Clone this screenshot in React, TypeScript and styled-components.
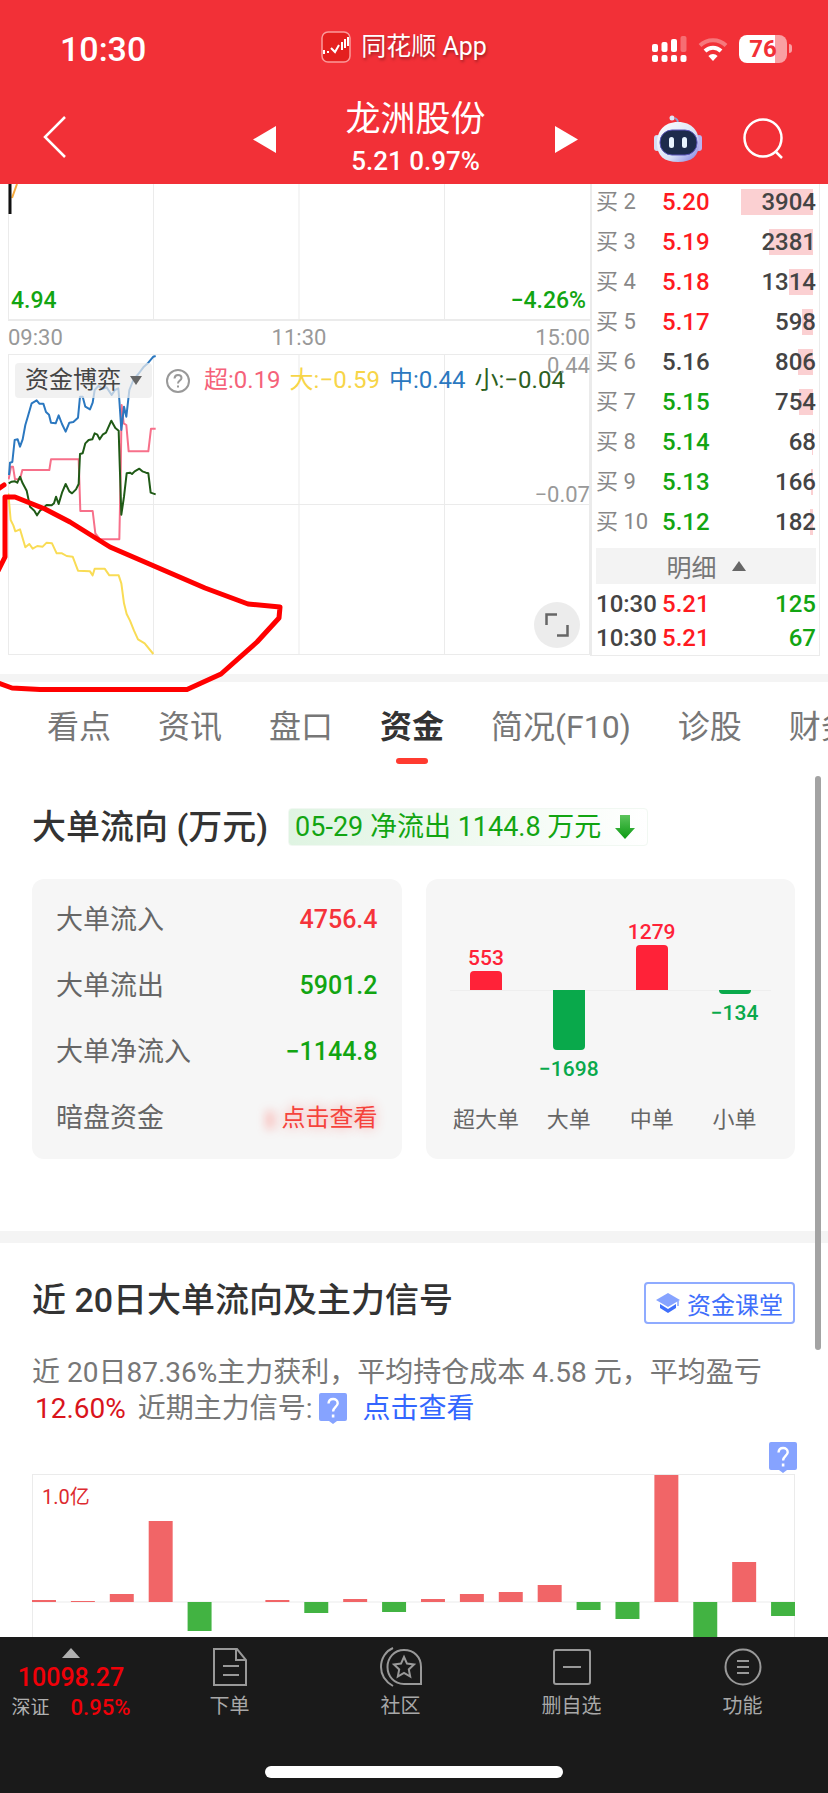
import React from 'react';
import styled, { createGlobalStyle } from 'styled-components';

const RED = '#f23037';
const UP = '#ff1a1f';
const DOWN = '#12a512';
const LINE = '#ebebeb';

const GlobalStyle = createGlobalStyle`
  * { box-sizing: border-box; }
  body {
    margin: 0;
    background: #fff;
    color: #333;
    font-family: Roboto, "Noto Sans CJK SC", sans-serif;
  }
  button, select { font: inherit; color: inherit; background: none; border: 0; padding: 0; margin: 0; }
  h1, h2, p { margin: 0; font-weight: 400; }
  svg { display: block; }
  a { text-decoration: none; color: inherit; }
`;

const Shell = styled.div`
  display: flex;
  flex-direction: column;
  height: 100vh;
  overflow: hidden;
`;

/* ---------- header ---------- */

const Header = styled.header`
  flex: none;
  background: ${RED};
  color: #fff;
`;

const StatusBar = styled.div`
  display: grid;
  grid-template-columns: 1fr auto 1fr;
  align-items: center;
  height: 97px;
  padding: 0 36px 0 16px;
`;

const Clock = styled.time`
  padding-left: 44px;
  font-size: 34px;
  line-height: 40px;
  font-weight: 500;
`;

const AppTag = styled.div`
  display: flex;
  align-items: center;
  gap: 10px;
  padding-bottom: 4px;
  font-size: 25px;
  line-height: 32px;
  text-shadow: 1px 2px 3px rgba(0, 0, 0, 0.35);
`;

const StatusIcons = styled.div`
  display: flex;
  justify-content: flex-end;
  align-items: center;
  gap: 11px;
`;

const Battery = styled.div`
  display: flex;
  align-items: center;
  gap: 2px;
`;

const BatteryBody = styled.div`
  width: 48px;
  height: 28px;
  border-radius: 8px;
  background: linear-gradient(90deg, #fff 76%, #f9a0a3 76%);
  color: ${RED};
  font-size: 24px;
  line-height: 28px;
  font-weight: 700;
  text-align: center;
`;

const BatteryTip = styled.div`
  width: 3px;
  height: 9px;
  border-radius: 0 3px 3px 0;
  background: #f9a0a3;
`;

const StockNav = styled.div`
  display: grid;
  grid-template-columns: 1fr auto 1fr;
  align-items: center;
  height: 87px;
  padding: 0 43px 3px;
`;

const StockSwitch = styled.div`
  display: flex;
  align-items: center;
  gap: 69px;
  padding-left: 3px;
`;

const StockTitle = styled.div`
  text-align: center;
`;

const StockName = styled.h1`
  font-size: 35px;
  line-height: 44px;
`;

const StockQuote = styled.p`
  font-size: 26px;
  line-height: 38px;
  font-weight: 500;
`;

const NavTools = styled.div`
  display: flex;
  align-items: center;
  justify-content: flex-end;
  gap: 40px;
`;

/* ---------- quote board ---------- */

const Scroller = styled.main`
  position: relative;
  flex: 1;
  min-height: 0;
  overflow: hidden auto;
  scrollbar-width: none;
`;

const Board = styled.section`
  position: relative;
  display: grid;
  grid-template-columns: minmax(0, 1fr) 230px;
  align-items: start;
  padding: 0 8px 0 8px;
`;

const Charts = styled.div`
  display: flex;
  flex-direction: column;
`;

const Plot = styled.svg`
  position: absolute;
  inset: 0;
  width: 100%;
  height: 100%;
`;

const PriceChart = styled.div`
  position: relative;
  display: flex;
  align-items: flex-end;
  justify-content: space-between;
  height: 137px;
  padding: 0 4px 6px 3px;
  color: ${DOWN};
  font-size: 23px;
  line-height: 28px;
  font-weight: 500;
`;

const TimeAxis = styled.div`
  display: flex;
  justify-content: space-between;
  font-size: 22px;
  line-height: 33px;
  color: #999;
`;

const FundChart = styled.div`
  position: relative;
  height: 301px;
`;

const FundBar = styled.div`
  position: relative;
  display: flex;
  align-items: center;
  gap: 14px;
  padding: 9px 0 0 7px;
`;

const PickerBox = styled.label`
  position: relative;
  width: 137px;
  border-radius: 4px;
  background: rgba(235, 235, 235, 0.72);
`;

const Picker = styled.select`
  display: block;
  width: 100%;
  height: 35px;
  padding-left: 10px;
  appearance: none;
  font-size: 24px;
  line-height: 35px;
  color: #444;
`;

const PickerCaret = styled.svg`
  position: absolute;
  right: 10px;
  top: 13px;
  pointer-events: none;
`;

const Legend = styled.div`
  display: flex;
  gap: 9px;
  font-size: 24px;
  line-height: 35px;
  white-space: nowrap;
`;

const LegendItem = styled.span<{ $color: string }>`
  color: ${(p) => p.$color};
`;

const ScaleMark = styled.span<{ $top: number }>`
  position: absolute;
  right: 0;
  top: ${(p) => p.$top}px;
  font-size: 22px;
  line-height: 24px;
  color: #999;
`;

const ExpandButton = styled.button`
  position: absolute;
  right: 10px;
  bottom: 7px;
  display: grid;
  place-items: center;
  width: 46px;
  height: 46px;
  border-radius: 50%;
  background: #ececec;
`;

const Book = styled.div`
  padding: 0 3px 0 4px;
  border: solid ${LINE};
  border-width: 0 1px 1px 2px;
`;

const BookTable = styled.table`
  width: 100%;
  border-collapse: collapse;
  table-layout: fixed;
`;

const LevelTable = styled(BookTable)`
  margin-top: -2px;
`;

const BookRow = styled.tr<{ $height: number }>`
  height: ${(p) => p.$height}px;
`;

const LevelCell = styled.th`
  width: 66px;
  padding: 0;
  text-align: left;
  font-weight: 400;
  font-size: 22px;
  line-height: 28px;
  color: #888;
  white-space: nowrap;
`;

const TimeCell = styled.td`
  width: 66px;
  padding: 0;
  font-size: 24px;
  line-height: 28px;
  font-weight: 500;
  color: #444;
`;

const PriceCell = styled.td<{ $color: string }>`
  padding: 0;
  font-size: 24px;
  line-height: 28px;
  font-weight: 500;
  color: ${(p) => p.$color};
`;

const AmountCell = styled(PriceCell)`
  text-align: right;
`;

const Volume = styled.span`
  position: relative;
  display: block;
`;

const VolumeBar = styled.span`
  position: absolute;
  right: 3px;
  top: 1px;
  height: 26px;
  background: #fbd0d2;
`;

const VolumeText = styled.span`
  position: relative;
`;

const DetailButton = styled.button`
  display: flex;
  align-items: center;
  justify-content: center;
  gap: 15px;
  width: 100%;
  height: 36px;
  margin: 6px 0 3px;
  background: #f3f3f3;
  color: #777;
  font-size: 25px;
`;

const Marker = styled.svg`
  position: absolute;
  left: 0;
  top: 286px;
  pointer-events: none;
  z-index: 2;
`;

const Band = styled.div<{ $gap: number; $height: number }>`
  height: ${(p) => p.$height}px;
  margin-top: ${(p) => p.$gap}px;
  background: #f4f4f4;
`;

/* ---------- tabs ---------- */

const Tabs = styled.nav`
  display: flex;
  gap: 47px;
  padding: 21px 0 0 47px;
  overflow: hidden;
`;

const Tab = styled.button<{ $active?: boolean }>`
  flex: none;
  display: flex;
  flex-direction: column;
  align-items: center;
  gap: 7px;
  font-size: 32px;
  line-height: 48px;
  font-weight: ${(p) => (p.$active ? 700 : 400)};
  color: ${(p) => (p.$active ? '#333' : '#777')};

  &::after {
    content: '';
    width: 32px;
    height: 6px;
    border-radius: 3px;
    background: ${(p) => (p.$active ? '#ff3b30' : 'transparent')};
  }
`;

/* ---------- big-order flow ---------- */

const Section = styled.section<{ $top: number }>`
  padding: ${(p) => p.$top}px 33px 0 32px;
`;

const SectionHead = styled.div`
  display: flex;
  align-items: center;
  gap: 20px;
`;

const SectionTitle = styled.h2`
  font-size: 34px;
  line-height: 48px;
  font-weight: 500;
  color: #333;
  white-space: nowrap;
`;

const FlowBadge = styled.div`
  display: flex;
  align-items: center;
  gap: 14px;
  height: 38px;
  padding: 0 12px 0 6px;
  border: 1px solid #f1f8f2;
  border-radius: 4px;
  background: linear-gradient(90deg, #dff4e2, #fff);
  color: #12a512;
  font-size: 27px;
  line-height: 34px;
  white-space: nowrap;
`;

const Cards = styled.div`
  display: grid;
  grid-template-columns: 1fr 1fr;
  gap: 24px;
  margin-top: 28px;
`;

const FlowCard = styled.dl`
  margin: 0;
  padding: 8px 24px;
  border-radius: 12px;
  background: #f6f6f6;
`;

const FlowRow = styled.div`
  display: flex;
  justify-content: space-between;
  line-height: 66px;
`;

const FlowLabel = styled.dt`
  font-size: 27px;
  color: #666;
`;

const FlowValue = styled.dd<{ $color: string }>`
  margin: 0;
  font-size: 25px;
  font-weight: 500;
  color: ${(p) => p.$color};
`;

const PeekLink = styled.a`
  font-size: 24px;
  font-weight: 400;
  color: #f5433c;
  text-shadow: 0 0 12px rgba(255, 60, 50, 0.45);

  &::before {
    content: '';
    display: inline-block;
    width: 8px;
    height: 18px;
    margin-right: 8px;
    vertical-align: middle;
    background: rgba(255, 90, 80, 0.35);
    filter: blur(5px);
  }
`;

const BarCard = styled.div`
  position: relative;
  display: flex;
  padding: 0 19px;
  border-radius: 12px;
  background: #f6f6f6;
`;

const ZeroLine = styled.div`
  position: absolute;
  left: 24px;
  right: 24px;
  top: 111px;
  height: 1px;
  background: #eee;
`;

const BarColumn = styled.div`
  position: relative;
  flex: 1;
  display: flex;
  flex-direction: column;
  align-items: center;
`;

const Half = styled.div<{ $up?: boolean }>`
  display: flex;
  flex-direction: column;
  align-items: center;
  justify-content: ${(p) => (p.$up ? 'flex-end' : 'flex-start')};
  gap: ${(p) => (p.$up ? 0 : 6)}px;
  height: ${(p) => (p.$up ? 111 : 115)}px;
  color: ${(p) => (p.$up ? '#ff2238' : '#09a94b')};
`;

const Bar = styled.div<{ $up?: boolean }>`
  width: 32px;
  background: currentColor;
  border-radius: ${(p) => (p.$up ? '4px 4px 0 0' : '0 0 4px 4px')};
`;

const BarValue = styled.span`
  font-size: 21px;
  line-height: 26px;
  font-weight: 500;
`;

const BarLabel = styled.span`
  font-size: 22px;
  line-height: 30px;
  color: #666;
  white-space: nowrap;
`;

/* ---------- 20-day signal ---------- */

const SignalHead = styled.div`
  display: flex;
  align-items: flex-end;
  justify-content: space-between;
`;

const ClassButton = styled.button`
  display: flex;
  align-items: center;
  gap: 7px;
  height: 42px;
  padding: 0 10px;
  border: 2px solid #8fabff;
  border-radius: 4px;
  color: #3f6ffb;
  font-size: 24px;
`;

const Summary = styled.p`
  margin-top: 31px;
  font-size: 28px;
  line-height: 36px;
  color: #777;
`;

const Gain = styled.span`
  padding: 0 5px 0 3px;
  color: #d9141c;
`;

const SummaryLink = styled.a`
  margin-left: 16px;
  color: #3366ff;
`;

const InlineHelp = styled.button`
  display: inline-block;
  margin-left: 6px;
  vertical-align: -6px;
`;

const HelpRow = styled.div`
  display: flex;
  justify-content: flex-end;
  margin: 15px -2px 1px 0;
`;

const DayChart = styled.div`
  position: relative;
  height: 240px;
`;

const DayScale = styled.span`
  position: absolute;
  left: 10px;
  top: 8px;
  font-size: 20px;
  line-height: 30px;
  color: #dd2a2f;
`;

const ScrollThumb = styled.div`
  position: absolute;
  right: 7px;
  top: 592px;
  width: 6px;
  height: 574px;
  border-radius: 3px;
  background: #a3a3a3;
`;

/* ---------- bottom bar ---------- */

const Footer = styled.footer`
  flex: none;
  display: flex;
  flex-direction: column;
  align-items: center;
  justify-content: space-between;
  height: 156px;
  padding-bottom: 15px;
  background: #1a1a1a;
`;

const FooterRow = styled.div`
  display: grid;
  grid-template-columns: 144px repeat(4, 1fr);
  width: 100%;
  padding-top: 10px;
`;

const Ticker = styled.button`
  display: flex;
  flex-direction: column;
  align-items: center;
  padding: 1px 2px 0 0;
  color: #f00008;
`;

const TickerIndex = styled.span`
  padding-top: 4px;
  font-size: 25px;
  line-height: 32px;
  font-weight: 500;
`;

const TickerChange = styled.span`
  display: flex;
  gap: 21px;
  font-size: 22px;
  line-height: 28px;
  font-weight: 500;
`;

const TickerName = styled.span`
  font-size: 19px;
  font-weight: 400;
  color: #b0b0b0;
`;

const FooterButton = styled.button`
  display: flex;
  flex-direction: column;
  align-items: center;
  gap: 5px;
  font-size: 20px;
  line-height: 28px;
  color: #a8a8a8;
`;

const HomeIndicator = styled.div`
  width: 36%;
  height: 12px;
  border-radius: 6px;
  background: #fff;
`;

/* ---------- data ---------- */

type Level = { name: string; price: string; color: string; amount: number; bar: number };

const LEVELS: Level[] = [
  { name: '买 2', price: '5.20', color: UP, amount: 3904, bar: 72 },
  { name: '买 3', price: '5.19', color: UP, amount: 2381, bar: 44 },
  { name: '买 4', price: '5.18', color: UP, amount: 1314, bar: 24 },
  { name: '买 5', price: '5.17', color: UP, amount: 598, bar: 11 },
  { name: '买 6', price: '5.16', color: '#444', amount: 806, bar: 15 },
  { name: '买 7', price: '5.15', color: DOWN, amount: 754, bar: 14 },
  { name: '买 8', price: '5.14', color: DOWN, amount: 68, bar: 1 },
  { name: '买 9', price: '5.13', color: DOWN, amount: 166, bar: 2 },
  { name: '买 10', price: '5.12', color: DOWN, amount: 182, bar: 3 },
];

const TRADES = [
  { time: '10:30', price: '5.21', amount: 125 },
  { time: '10:30', price: '5.21', amount: 67 },
];

const LEGEND = [
  { text: '超:0.19', color: '#f5627a' },
  { text: '大:−0.59', color: '#f7d548' },
  { text: '中:0.44', color: '#2b78c0' },
  { text: '小:−0.04', color: '#2d5f22' },
];

const FUND_LINES = [
  {
    color: '#f9dc55',
    points:
      '25,460 32,540 40,556 46,574 60,568 76,622 88,612 98,626 112,618 128,620 140,608 156,610 170,640 186,640 200,648 218,650 234,692 270,694 278,706 284,686 314,686 328,706 356,706 364,730 372,790 380,822 390,842 402,872 414,898 434,910 460,942',
  },
  {
    color: '#f7708a',
    points:
      '26,418 33,380 39,380 45,418 60,418 67,390 148,390 153,358 236,358 241,513 278,513 286,580 300,598 358,598 362,400 365,195 371,250 379,255 386,334 445,334 453,266 467,266',
  },
  {
    color: '#2b78c0',
    points:
      '27,405 30,368 37,366 44,300 53,298 60,320 68,298 76,255 84,228 95,190 110,181 118,191 130,191 138,216 147,224 153,248 167,250 176,226 186,252 197,275 208,248 220,246 234,233 240,170 248,170 256,200 270,208 278,188 284,150 295,138 310,146 320,142 335,165 345,150 355,145 358,180 364,270 372,200 379,230 388,150 400,120 415,102 430,82 445,68 460,50 467,48',
  },
  {
    color: '#1f5a16',
    points:
      '26,430 35,425 45,424 52,428 60,410 68,430 80,452 90,500 103,512 111,526 120,512 140,495 155,496 162,490 168,470 176,492 186,458 197,432 208,454 216,460 228,448 236,432 240,342 248,340 256,310 266,300 277,298 284,280 292,284 299,298 308,284 318,278 334,242 346,264 356,272 360,400 364,524 372,470 380,400 390,398 396,402 404,394 418,386 427,394 438,398 445,400 452,458 467,463',
  },
];

const TABS = ['看点', '资讯', '盘口', '资金', '简况(F10)', '诊股', '财务'];

const ORDER_BARS = [
  { label: '超大单', text: '553', size: 19, up: true },
  { label: '大单', text: '−1698', size: 60, up: false },
  { label: '中单', text: '1279', size: 45, up: true },
  { label: '小单', text: '−134', size: 4, up: false },
];

const DAY_BARS = [2, 1, 8, 81, -29, 0, 2, -11, 3, -10, 3, 8, 10, 17, -8, -17, 127, -60, 40, -14];

/* ---------- small drawings ---------- */

const AppLogo = () => (
  <svg width="30" height="32" viewBox="0 0 30 32" fill="none">
    <rect x="1" y="1" width="28" height="30" rx="6" fill="#e4201f" stroke="#fb9a9b" strokeWidth="1.5" />
    <path d="M3 19v4M7 20v2M10 17l4 4 4-7M21 11v8M24 8v9M27 6v9" stroke="#fff" strokeWidth="2" />
  </svg>
);

const Signal = () => (
  <svg width="35" height="26" viewBox="0 0 35 26" fill="#fff">
    <rect x="0" y="8" width="6" height="8" rx="2" />
    <rect x="9.5" y="6" width="6" height="10" rx="2" />
    <rect x="19" y="3" width="6" height="13" rx="2" />
    <rect x="28.5" y="0" width="6" height="16" rx="2" opacity=".3" />
    {[0, 9.5, 19, 28.5].map((x) => (
      <rect key={x} x={x} y="19" width="6" height="7" rx="2" />
    ))}
  </svg>
);

const Wifi = () => (
  <svg width="30" height="24" viewBox="0 0 30 24" fill="none" strokeWidth="4">
    <path d="M2 8.500a18.500 18.500 0 0 1 26 0" stroke="#fff" opacity=".35" />
    <path d="M7 14a11.500 11.500 0 0 1 16 0" stroke="#fff" />
    <path d="M15 24l-4.600-5a6.500 6.500 0 0 1 9.200 0z" fill="#fff" />
  </svg>
);

const Robot = () => (
  <svg width="50" height="48" viewBox="0 0 50 48">
    <defs>
      <linearGradient id="shell" x1="0" y1="0" x2="1" y2="1">
        <stop offset="0" stopColor="#fff" />
        <stop offset=".6" stopColor="#d9e2f6" />
        <stop offset="1" stopColor="#7d7be0" />
      </linearGradient>
    </defs>
    <path d="M23 9c3-2 2-4-1-6" fill="none" stroke="#8fa0cf" strokeWidth="2" />
    <circle cx="19" cy="3" r="2.5" fill="#dfe6f7" />
    <rect x="1" y="20" width="6" height="16" rx="3" fill="#d5def4" />
    <rect x="43" y="20" width="6" height="16" rx="3" fill="#b9b3f0" />
    <path d="M25 7c14 0 21 9 21 21 0 13-7 19-21 19S4 41 4 28C4 16 11 7 25 7z" fill="url(#shell)" />
    <rect x="7" y="15" width="37" height="25" rx="12" fill="#1d2b4c" stroke="#5a55b8" strokeWidth="1" />
    <rect x="16" y="22" width="5" height="11" rx="2.5" fill="#e9f4ff" />
    <rect x="29" y="22" width="5" height="11" rx="2.5" fill="#e9f4ff" />
  </svg>
);

const HelpTag = () => (
  <svg width="28" height="31" viewBox="0 0 28 31" fill="none">
    <path d="M2 0h24a2 2 0 0 1 2 2v24a2 2 0 0 1-2 2h-8l-4 3-4-3H2a2 2 0 0 1-2-2V2a2 2 0 0 1 2-2z" fill="#86a3ff" />
    <path d="M9.500 10.500c.2-3 2-4.500 4.600-4.500s4.600 1.600 4.600 4.200c0 3.600-4.600 3.800-4.600 8.300" stroke="#fff" strokeWidth="2.4" />
    <path d="M14.100 21.500v3" stroke="#fff" strokeWidth="2.6" />
  </svg>
);

const Cap = () => (
  <svg width="24" height="20" viewBox="0 0 24 20">
    <path d="M12 0l12 7-12 7L0 7z" fill="#86a3ff" />
    <path d="M4 11l8 5 8-5v4l-8 5-8-5z" fill="#3f6ffb" />
    <path d="M22 8v5" stroke="#86a3ff" strokeWidth="1.5" />
  </svg>
);

const FOOTER_ITEMS = [
  {
    label: '下单',
    icon: (
      <>
        <path d="M3 2h23l9 11v25H3z" />
        <path d="M25 2v11h10M12 19h16M12 28h16" />
      </>
    ),
  },
  {
    label: '社区',
    icon: (
      <>
        <path d="M23 3c10 0 17 7 17 17v17H23C13 37 6.500 29 6.500 20S13 3 23 3z" />
        <path d="M12 1C5 4 0 11 0 20s5 15 12 19" />
        <path d="M23 10l3 6.600 7 .9-5.200 4.900 1.400 7.100L23 26l-6.200 3.500 1.400-7.100L13 17.500l7-.9z" />
      </>
    ),
  },
  {
    label: '删自选',
    icon: (
      <>
        <rect x="1" y="3" width="36" height="34" rx="2" />
        <path d="M10 20h18" />
      </>
    ),
  },
  {
    label: '功能',
    icon: (
      <>
        <circle cx="19" cy="20" r="17.5" />
        <path d="M13 14h12M13 20h12M13 26h12" />
      </>
    ),
  },
];

const GRID_STOPS = [25, 50, 75];

export default function App() {
  return (
    <>
      <GlobalStyle />
      <Shell>
        <Header>
          <StatusBar>
            <Clock>10:30</Clock>
            <AppTag>
              <AppLogo />
              同花顺 App
            </AppTag>
            <StatusIcons>
              <Signal />
              <Wifi />
              <Battery>
                <BatteryBody>76</BatteryBody>
                <BatteryTip />
              </Battery>
            </StatusIcons>
          </StatusBar>
          <StockNav>
            <div>
              <button aria-label="返回">
                <svg width="24" height="42" viewBox="0 0 24 42" fill="none" stroke="#fff" strokeWidth="2.5">
                  <path d="M22 1L2 21l20 20" />
                </svg>
              </button>
            </div>
            <StockSwitch>
              <button aria-label="上一只">
                <svg width="23" height="27" viewBox="0 0 23 27" fill="#fff">
                  <path d="M23 0v27L0 13.500z" />
                </svg>
              </button>
              <StockTitle>
                <StockName>龙洲股份</StockName>
                <StockQuote>5.21 0.97%</StockQuote>
              </StockTitle>
              <button aria-label="下一只">
                <svg width="23" height="27" viewBox="0 0 23 27" fill="#fff">
                  <path d="M0 0v27l23-13.500z" />
                </svg>
              </button>
            </StockSwitch>
            <NavTools>
              <button aria-label="智能助手">
                <Robot />
              </button>
              <button aria-label="搜索">
                <svg width="42" height="42" viewBox="0 0 42 42" fill="none" stroke="#fff" strokeWidth="2.5">
                  <circle cx="20" cy="20" r="18.5" />
                  <path d="M33 34l6 6" />
                </svg>
              </button>
            </NavTools>
          </StockNav>
        </Header>

        <Scroller>
          <Board>
            <Charts>
              <PriceChart>
                <Plot>
                  {GRID_STOPS.map((x) => (
                    <line key={x} x1={`${x}%`} x2={`${x}%`} y1="0" y2="100%" stroke={LINE} />
                  ))}
                  <line x1="0" x2="0" y1="0" y2="100%" stroke={LINE} strokeWidth="2" />
                  <line x1="0" x2="100%" y1="136" y2="136" stroke={LINE} strokeWidth="2" />
                  <path d="M9 0L4 14" stroke="#f5a93c" strokeWidth="2" />
                  <path d="M2 0v30" stroke="#111" strokeWidth="3" />
                </Plot>
                <span>4.94</span>
                <span>−4.26%</span>
              </PriceChart>
              <TimeAxis>
                <span>09:30</span>
                <span>11:30</span>
                <span>15:00</span>
              </TimeAxis>
              <FundChart>
                <Plot>
                  {GRID_STOPS.map((x) => (
                    <line key={x} x1={`${x}%`} x2={`${x}%`} y1="0" y2="100%" stroke={LINE} />
                  ))}
                  <line x1="0" x2="100%" y1="50%" y2="50%" stroke={LINE} />
                  <rect x="0" y="0" width="100%" height="100%" fill="none" stroke={LINE} strokeWidth="2" />
                </Plot>
                <Plot viewBox="24 42 1746 903" preserveAspectRatio="none">
                  {FUND_LINES.map((line) => (
                    <polyline
                      key={line.color}
                      points={line.points}
                      fill="none"
                      stroke={line.color}
                      strokeWidth="6"
                      strokeLinejoin="round"
                    />
                  ))}
                </Plot>
                <FundBar>
                  <PickerBox>
                    <Picker aria-label="指标" defaultValue="资金博弈">
                      <option>资金博弈</option>
                    </Picker>
                    <PickerCaret width="12" height="9" viewBox="0 0 12 9" fill="#666">
                      <path d="M0 0h12L6 9z" />
                    </PickerCaret>
                  </PickerBox>
                  <button aria-label="说明">
                    <svg width="24" height="24" viewBox="0 0 24 24" fill="none" stroke="#999" strokeWidth="2">
                      <circle cx="12" cy="12" r="11" />
                      <path d="M8.500 9.500c.2-2.500 1.600-3.500 3.500-3.500s3.500 1.200 3.500 3c0 2.600-3.500 2.600-3.500 5.500M12 16.500v2" />
                    </svg>
                  </button>
                  <Legend>
                    {LEGEND.map((item) => (
                      <LegendItem key={item.text} $color={item.color}>
                        {item.text}
                      </LegendItem>
                    ))}
                  </Legend>
                </FundBar>
                <ScaleMark $top={0}>0.44</ScaleMark>
                <ScaleMark $top={129}>−0.07</ScaleMark>
                <ExpandButton aria-label="全屏">
                  <svg width="26" height="26" viewBox="0 0 26 26" fill="none" stroke="#666" strokeWidth="2.5">
                    <path d="M2.500 13V2.500H13M23.500 13v10.500H13" />
                  </svg>
                </ExpandButton>
              </FundChart>
            </Charts>

            <Book>
              <LevelTable>
                <tbody>
                  {LEVELS.map((level) => (
                    <BookRow key={level.name} $height={40}>
                      <LevelCell scope="row">{level.name}</LevelCell>
                      <PriceCell $color={level.color}>{level.price}</PriceCell>
                      <AmountCell $color="#444">
                        <Volume>
                          <VolumeBar style={{ width: level.bar }} />
                          <VolumeText>{level.amount}</VolumeText>
                        </Volume>
                      </AmountCell>
                    </BookRow>
                  ))}
                </tbody>
              </LevelTable>
              <DetailButton>
                明细
                <svg width="14" height="10" viewBox="0 0 14 10" fill="#666">
                  <path d="M0 10h14L7 0z" />
                </svg>
              </DetailButton>
              <BookTable>
                <tbody>
                  {TRADES.map((trade) => (
                    <BookRow key={trade.amount} $height={34}>
                      <TimeCell>{trade.time}</TimeCell>
                      <PriceCell $color={UP}>{trade.price}</PriceCell>
                      <AmountCell $color={DOWN}>{trade.amount}</AmountCell>
                    </BookRow>
                  ))}
                </tbody>
              </BookTable>
            </Book>

            <Marker width="290" height="230" viewBox="0 470 290 230" fill="none" stroke="#f00" strokeWidth="5" strokeLinejoin="round">
              <path d="M-2 489L4 485" strokeLinecap="round" />
              <path d="M-2 571L5 557V497H15L45 509L70 522L110 547L205 588L248 604L280 607L279 618L257 642L221 674L187 689.500H40L12 688L-2 683" />
            </Marker>
          </Board>

          <Band $gap={18} $height={8} />

          <Tabs>
            {TABS.map((tab) => (
              <Tab key={tab} $active={tab === '资金'}>
                {tab}
              </Tab>
            ))}
          </Tabs>

          <Section $top={39}>
            <SectionHead>
              <SectionTitle>大单流向 (万元)</SectionTitle>
              <FlowBadge>
                05-29 净流出 1144.8 万元
                <svg width="20" height="24" viewBox="0 0 20 24">
                  <defs>
                    <linearGradient id="fall" x1="0" y1="0" x2="0" y2="1">
                      <stop offset="0" stopColor="#5cc45c" />
                      <stop offset="1" stopColor="#0b9a12" />
                    </linearGradient>
                  </defs>
                  <path d="M5 0h10v13h5L10 24 0 13h5z" fill="url(#fall)" />
                </svg>
              </FlowBadge>
            </SectionHead>
            <Cards>
              <FlowCard>
                <FlowRow>
                  <FlowLabel>大单流入</FlowLabel>
                  <FlowValue $color="#f5333a">4756.4</FlowValue>
                </FlowRow>
                <FlowRow>
                  <FlowLabel>大单流出</FlowLabel>
                  <FlowValue $color={DOWN}>5901.2</FlowValue>
                </FlowRow>
                <FlowRow>
                  <FlowLabel>大单净流入</FlowLabel>
                  <FlowValue $color={DOWN}>−1144.8</FlowValue>
                </FlowRow>
                <FlowRow>
                  <FlowLabel>暗盘资金</FlowLabel>
                  <FlowValue $color="#f5333a">
                    <PeekLink href="#dark-pool">点击查看</PeekLink>
                  </FlowValue>
                </FlowRow>
              </FlowCard>
              <BarCard>
                <ZeroLine />
                {ORDER_BARS.map((bar) => (
                  <BarColumn key={bar.label}>
                    <Half $up>
                      {bar.up && (
                        <>
                          <BarValue>{bar.text}</BarValue>
                          <Bar $up style={{ height: bar.size }} />
                        </>
                      )}
                    </Half>
                    <Half>
                      {!bar.up && (
                        <>
                          <Bar style={{ height: bar.size }} />
                          <BarValue>{bar.text}</BarValue>
                        </>
                      )}
                    </Half>
                    <BarLabel>{bar.label}</BarLabel>
                  </BarColumn>
                ))}
              </BarCard>
            </Cards>
          </Section>

          <Band $gap={72} $height={12} />

          <Section $top={33}>
            <SignalHead>
              <SectionTitle>近 20日大单流向及主力信号</SectionTitle>
              <ClassButton>
                <Cap />
                资金课堂
              </ClassButton>
            </SignalHead>
            <Summary>
              近 20日87.36%主力获利，平均持仓成本 4.58 元，平均盈亏 <Gain>12.60%</Gain> 近期主力信号:
              <InlineHelp aria-label="信号说明">
                <HelpTag />
              </InlineHelp>
              <SummaryLink href="#signal">点击查看</SummaryLink>
            </Summary>
            <HelpRow>
              <button aria-label="图表说明">
                <HelpTag />
              </button>
            </HelpRow>
            <DayChart>
              <Plot viewBox="0 0 764 240" preserveAspectRatio="none">
                <rect x="0" y="0" width="764" height="260" fill="none" stroke={LINE} strokeWidth="2" />
                <path d="M0 128h764" stroke={LINE} />
                {DAY_BARS.map((value, i) => (
                  <rect
                    key={i}
                    x={i * 38.95}
                    y={value > 0 ? 128 - value : 128}
                    width="24"
                    height={Math.abs(value)}
                    fill={value > 0 ? '#f16567' : '#42b342'}
                  />
                ))}
              </Plot>
              <DayScale>1.0亿</DayScale>
            </DayChart>
          </Section>
          <ScrollThumb />
        </Scroller>

        <Footer>
          <FooterRow>
            <Ticker>
              <svg width="18" height="10" viewBox="0 0 18 10" fill="#b0b0b0">
                <path d="M0 10h18L9 0z" />
              </svg>
              <TickerIndex>10098.27</TickerIndex>
              <TickerChange>
                <TickerName>深证</TickerName>
                0.95%
              </TickerChange>
            </Ticker>
            {FOOTER_ITEMS.map((item) => (
              <FooterButton key={item.label}>
                <svg width="42" height="40" viewBox={item.label === '社区' ? '-1 0 42 40' : '-2 0 42 40'} fill="none" stroke="#999" strokeWidth="2">
                  {item.icon}
                </svg>
                {item.label}
              </FooterButton>
            ))}
          </FooterRow>
          <HomeIndicator />
        </Footer>
      </Shell>
    </>
  );
}
